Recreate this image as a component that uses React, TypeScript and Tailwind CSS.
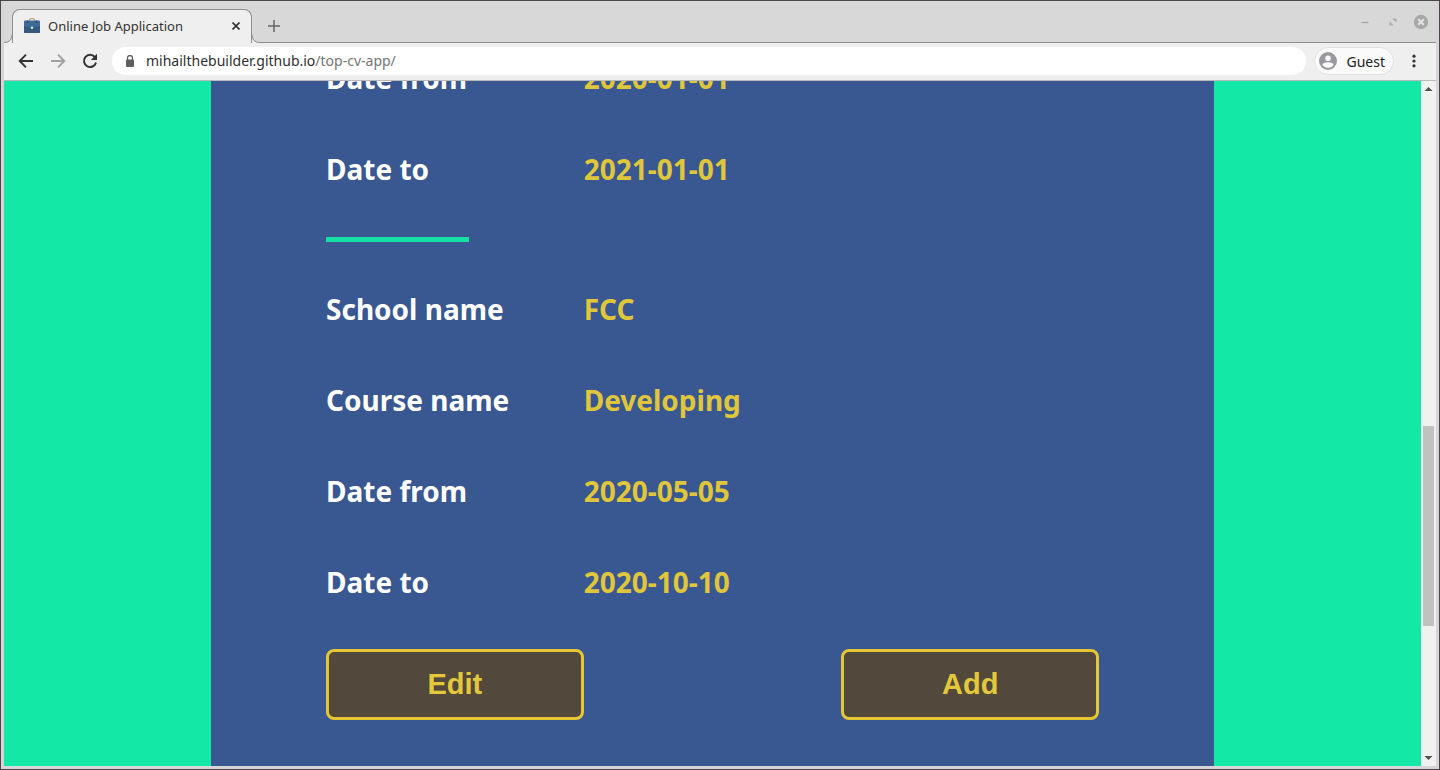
import React from "react";

type Field = { label: string; value: string };

const firstSchool: Field[] = [
  { label: "Date from", value: "2020-01-01" },
  { label: "Date to", value: "2021-01-01" },
];

const secondSchool: Field[] = [
  { label: "School name", value: "FCC" },
  { label: "Course name", value: "Developing" },
  { label: "Date from", value: "2020-05-05" },
  { label: "Date to", value: "2020-10-10" },
];

function Briefcase() {
  return (
    <svg className="h-4 w-4 shrink-0" viewBox="0 0 16 16" aria-hidden="true">
      <path d="M5.500 3V1.800Q5.500 .6 6.700 .6h2.600Q10.500 .6 10.500 1.800V3" fill="none" stroke="#c2a878" strokeWidth="1.200" />
      <rect x="0" y="2.500" width="16" height="12.500" rx="1" fill="#3f6a96" />
      <path d="M0 8Q8 11 16 8v6a1 1 0 0 1-1 1H1a1 1 0 0 1-1-1Z" fill="#35597f" />
      <path d="M3.500 2.500V5M12.500 2.500V5" stroke="#2c4c70" strokeWidth="1.200" />
      <circle cx="8" cy="9.800" r="1.200" fill="#e8f0c8" />
    </svg>
  );
}

function TabStrip() {
  return (
    <div className="flex h-[42px] items-end bg-[#d8d8d8]">
      <svg className="h-8 w-2 shrink-0" viewBox="0 0 8 32" aria-hidden="true">
        <path d="M0 32Q8 32 8 24V32Z" fill="#efefef" />
        <path d="M0 31.500Q8 31.500 8 23.500" fill="none" stroke="#8f8f8f" />
      </svg>
      <div className="flex h-[34px] w-60 items-center rounded-t-lg border border-b-0 border-[#8f8f8f] bg-[#efefef] pb-0.5 pl-[11px] pr-[7px]">
        <Briefcase />
        <span className="ml-2 grow whitespace-nowrap text-[13px] leading-5 text-[#333]">Online Job Application</span>
        <button aria-label="Close tab" className="flex h-4 w-4 items-center justify-center">
          <svg className="h-2 w-2" viewBox="0 0 8 8" aria-hidden="true">
            <path d="M.5.5l7 7M7.500.500l-7 7" stroke="#333" strokeWidth="1.600" />
          </svg>
        </button>
      </div>
      <svg className="h-8 w-2 shrink-0" viewBox="0 0 8 32" aria-hidden="true">
        <path d="M8 32Q0 32 0 24V32Z" fill="#efefef" />
        <path d="M8 31.500Q0 31.500 0 23.500" fill="none" stroke="#8f8f8f" />
      </svg>
      <div className="flex h-full grow items-center border-b border-[#8f8f8f] pl-1.5 pr-[7px]">
        <button aria-label="New tab" className="mt-2 flex h-4 w-4 items-center justify-center">
          <svg className="h-3 w-3" viewBox="0 0 12 12" aria-hidden="true">
            <path d="M6 0v12M0 6h12" stroke="#666" strokeWidth="1.500" />
          </svg>
        </button>
        <div className="ml-auto flex items-center gap-3">
          <button aria-label="Minimize" className="flex h-4 w-4 items-center justify-center">
            <svg className="h-4 w-4" viewBox="0 0 16 16" aria-hidden="true">
              <path d="M4.500 8.500h7" stroke="#a8a8a8" strokeWidth="1.400" />
            </svg>
          </button>
          <button aria-label="Restore" className="flex h-4 w-4 items-center justify-center">
            <svg className="h-4 w-4" viewBox="0 0 16 16" aria-hidden="true">
              <path d="M7.200 4.500h4.300v4.300ZM4.500 7.200v4.300h4.300Z" fill="#adadad" />
            </svg>
          </button>
          <button aria-label="Close" className="flex h-4 w-4 items-center justify-center">
            <svg className="h-4 w-4" viewBox="0 0 16 16" aria-hidden="true">
              <circle cx="8" cy="8" r="7.200" fill="#a8a8a8" />
              <path d="M5.200 5.200l5.600 5.600M10.800 5.200l-5.600 5.600" stroke="#e4e4e4" strokeWidth="2" />
            </svg>
          </button>
        </div>
      </div>
    </div>
  );
}

function Toolbar() {
  return (
    <div className="flex h-[38px] items-center border-b border-[#b9b9b9] bg-[#efefef] pb-px pl-3 pr-3.5">
      <div className="flex items-center gap-3">
        <button aria-label="Back" className="h-5 w-5">
          <svg className="h-5 w-5" viewBox="0 0 20 20" aria-hidden="true">
            <path d="M17 10H4M10 3.700L3.700 10l6.300 6.300" fill="none" stroke="#333" strokeWidth="1.900" />
          </svg>
        </button>
        <button aria-label="Forward" className="h-5 w-5">
          <svg className="h-5 w-5" viewBox="0 0 20 20" aria-hidden="true">
            <path d="M3 10h13M10 3.700L16.300 10 10 16.300" fill="none" stroke="#a0a0a0" strokeWidth="1.900" />
          </svg>
        </button>
        <button aria-label="Reload" className="h-5 w-5">
          <svg className="h-5 w-5" viewBox="0 0 20 20" aria-hidden="true">
            <path d="M14.800 6A6.100 6.100 0 1 0 16 11.500" fill="none" stroke="#333" strokeWidth="2" />
            <path d="M17 2.800v6.200h-6.200Z" fill="#333" />
          </svg>
        </button>
      </div>
      <div className="ml-3 flex h-7 grow items-center rounded-full bg-white pl-3">
        <svg className="h-3 w-3 shrink-0" viewBox="0 0 12 12" aria-hidden="true">
          <path d="M3.500 5V3a2.500 2.500 0 0 1 5 0v2" fill="none" stroke="#5f5f5f" strokeWidth="1.300" />
          <rect x="2" y="4.500" width="8" height="7.500" rx="1" fill="#5f5f5f" />
        </svg>
        <a href="#top" className="ml-2.5 whitespace-nowrap text-[14px] leading-5 text-[#757575]">
          <span className="text-[#2f2f2f]">mihailthebuilder.github.io</span>/top-cv-app/
        </a>
      </div>
      <button className="ml-2 flex h-7 items-center gap-2.5 rounded-full border border-[#e2e2e2] bg-[#fafafa] pl-1 pr-2 text-[14px] text-[#222]">
        <svg className="h-[18px] w-[18px]" viewBox="0 0 18 18" aria-hidden="true">
          <circle cx="9" cy="9" r="9" fill="#9a9ba0" />
          <circle cx="9" cy="6.200" r="2.800" fill="#fafafa" />
          <path d="M3.500 13.300Q3.500 10.200 9 10.200t5.500 3.100Q12.300 16 9 16t-5.500-2.700Z" fill="#fafafa" />
        </svg>
        Guest
      </button>
      <button aria-label="Menu" className="ml-3 flex h-5 w-4 items-center justify-center">
        <svg className="h-4 w-4" viewBox="0 0 16 16" aria-hidden="true">
          <circle cx="8" cy="3.200" r="1.600" fill="#333" />
          <circle cx="8" cy="8" r="1.600" fill="#333" />
          <circle cx="8" cy="12.800" r="1.600" fill="#333" />
        </svg>
      </button>
    </div>
  );
}

function Fields({ items }: { items: Field[] }) {
  return (
    <dl>
      {items.map((f) => (
        <div key={f.label} className="grid grid-cols-3 pt-[27px] pb-[29px] text-[28px] leading-[35px] font-bold">
          <dt className="whitespace-nowrap text-white">{f.label}</dt>
          <dd className="whitespace-nowrap text-[#e0c63a]">{f.value}</dd>
        </div>
      ))}
    </dl>
  );
}

function ActionButton({ children }: { children: React.ReactNode }) {
  return (
    <button className="h-[71px] rounded-lg border-3 border-[#e5c736] bg-[#52483b] font-['Liberation_Sans',sans-serif] text-[29px] font-bold text-[#e2c83a]">
      {children}
    </button>
  );
}

function ScrollBar() {
  return (
    <div className="flex w-[15px] shrink-0 flex-col items-center bg-[#f1f1f1]" aria-hidden="true">
      <svg className="h-4 w-[15px]" viewBox="0 0 15 16">
        <path d="M3.500 10L7.500 6l4 4Z" fill="#505050" />
      </svg>
      <div className="grow-[329]" />
      <div className="w-[11px] grow-[200] bg-[#c1c1c1]" />
      <div className="grow-[124]" />
      <svg className="h-4 w-[15px]" viewBox="0 0 15 16">
        <path d="M3.500 6h8l-4 4Z" fill="#505050" />
      </svg>
    </div>
  );
}

export default function App() {
  return (
    <div className="flex h-screen flex-col border border-[#4a464a] bg-[#d8d5d8] px-[3px] pb-[3px] font-['Noto_Sans',sans-serif]">
      <TabStrip />
      <Toolbar />
      <div className="flex min-h-0 grow">
        <main className="flex min-w-0 grow justify-center overflow-hidden bg-[#14e8a6]">
          <section className="w-full max-w-[1003px] bg-[#395790] px-[115px]">
            <div className="-mt-[47px]">
              <Fields items={firstSchool} />
              <hr className="mt-[21px] mb-[23px] h-[5px] w-[143px] border-0 bg-[#17e0a6]" />
              <Fields items={secondSchool} />
              <div className="mt-5 grid grid-cols-3">
                <ActionButton>Edit</ActionButton>
                <div />
                <ActionButton>Add</ActionButton>
              </div>
            </div>
          </section>
        </main>
        <ScrollBar />
      </div>
    </div>
  );
}
